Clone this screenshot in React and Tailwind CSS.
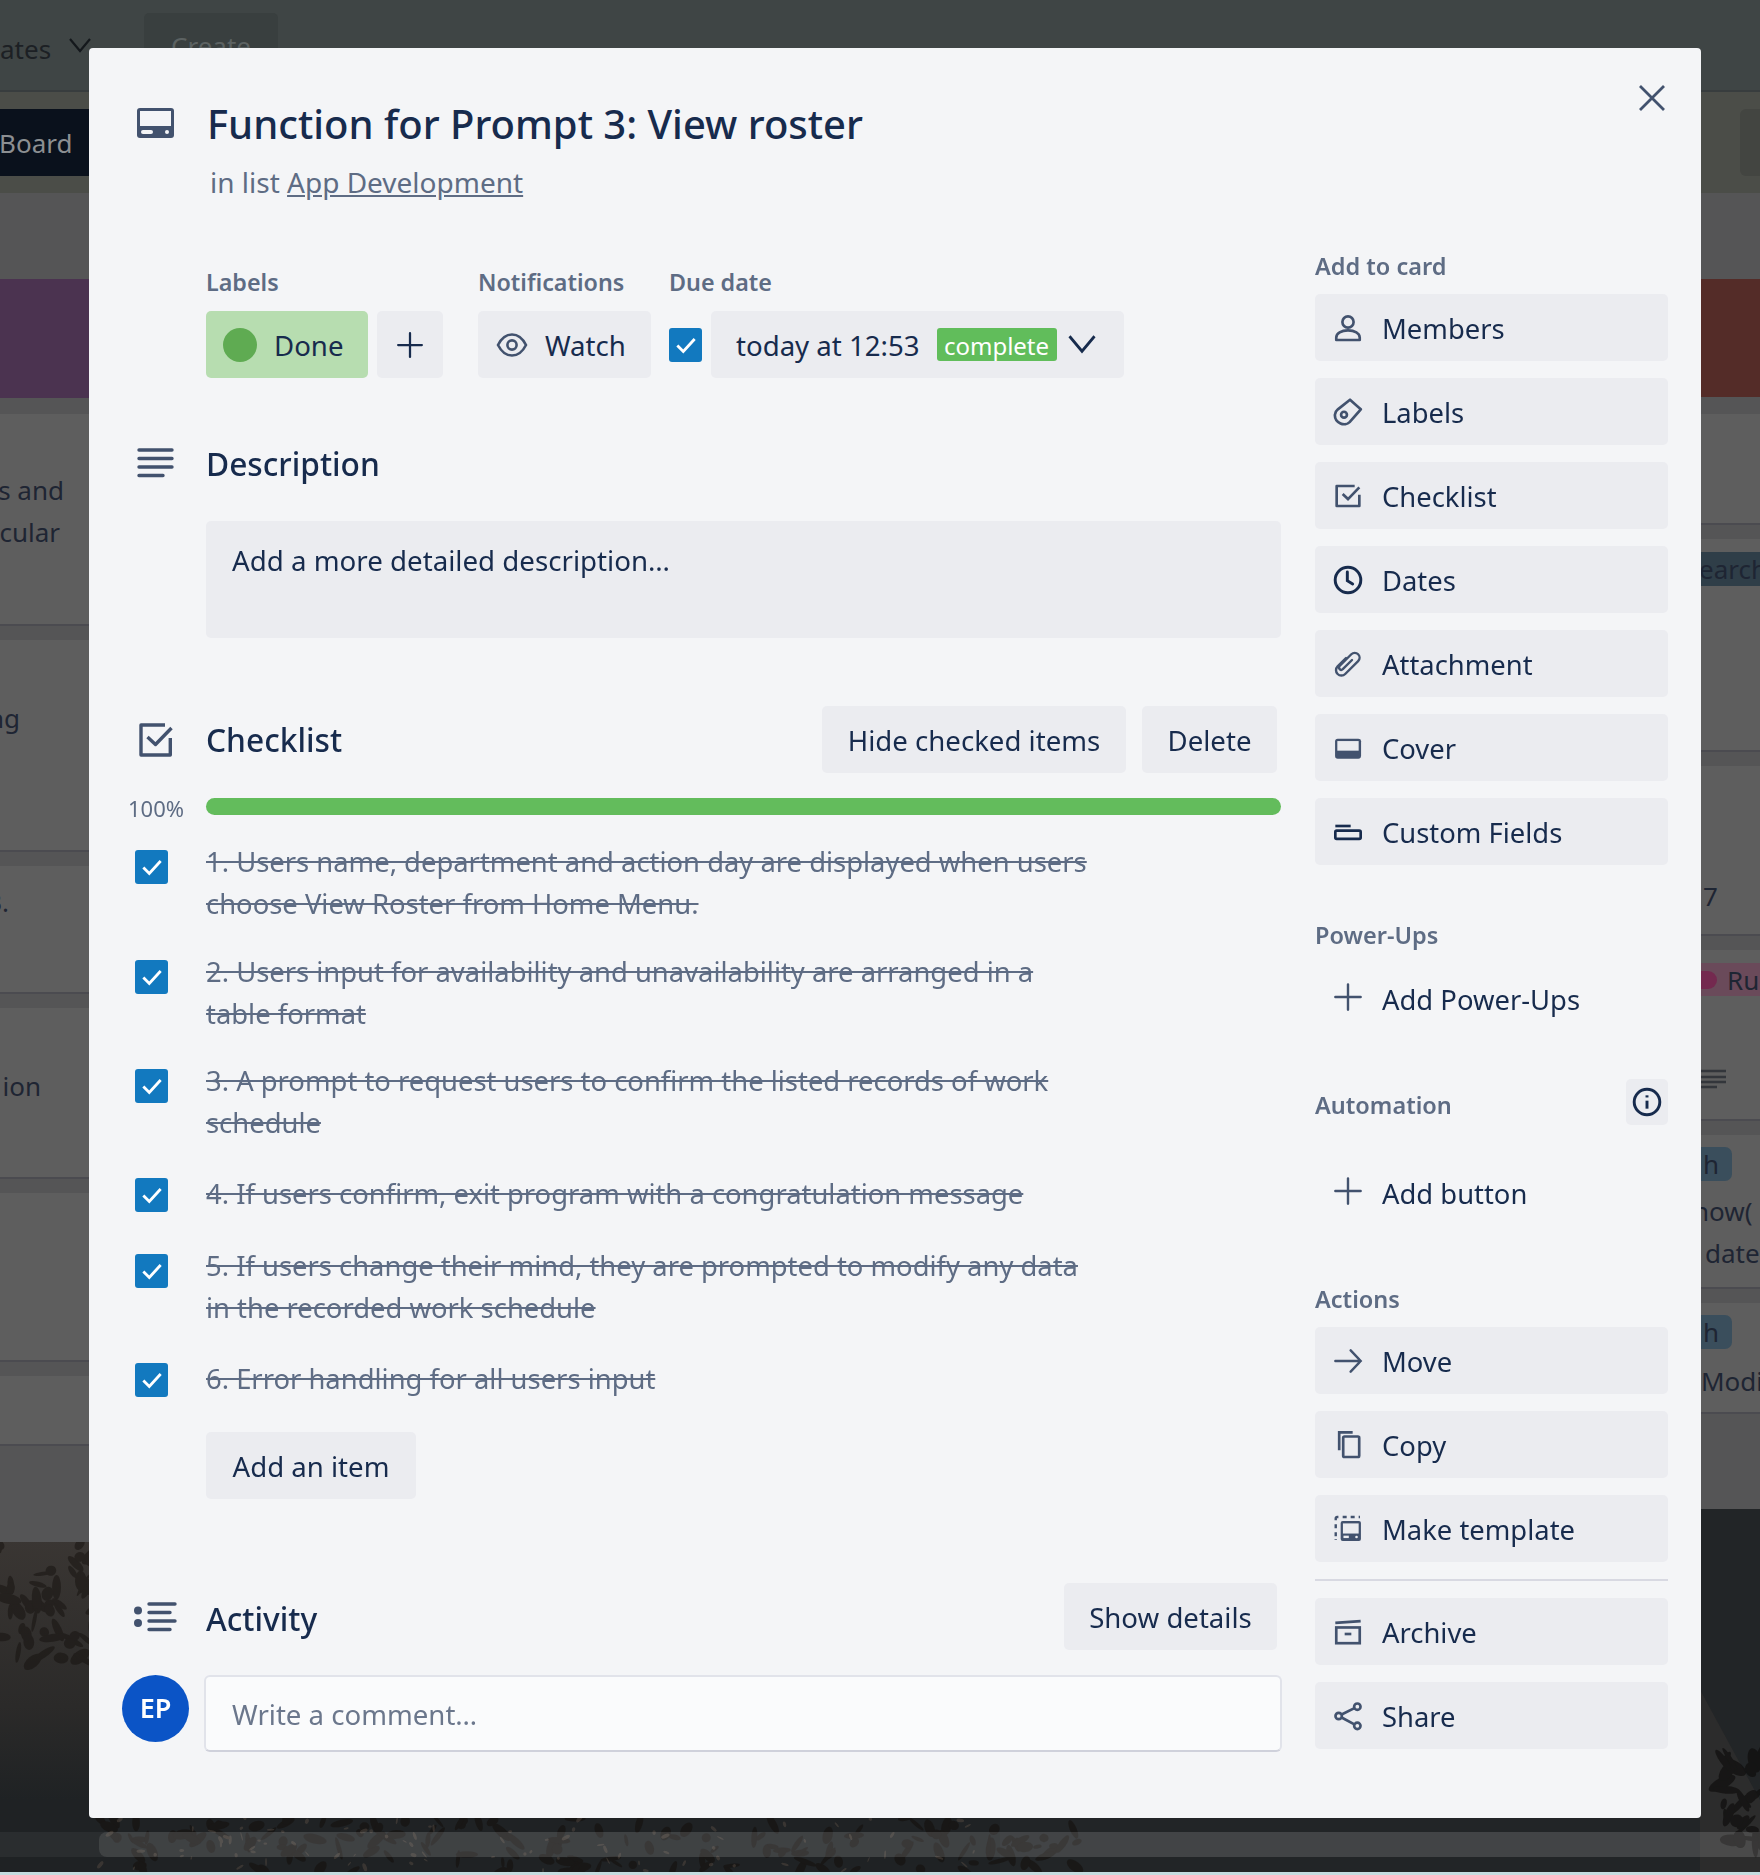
import React from 'react';

const leftCards = [
  { h: 212, lines: [['s and', 64], ['cular', 60]], pt: 55 },
  { h: 212, lines: [['ng', 20]], pt: 57 },
  { h: 128, lines: [['3.', 9]], pt: 15 },
  { h: 171, lines: [['ion', 41]], pt: 57 },
  { h: 169, lines: [] },
  { h: 70, lines: [] },
];

const addToCard = [
  ['Members', MembersIcon],
  ['Labels', TagIcon],
  ['Checklist', ChecklistIcon],
  ['Dates', ClockIcon],
  ['Attachment', ClipIcon],
  ['Cover', CoverIcon],
  ['Custom Fields', FieldsIcon],
];

const checklist = [
  { lines: ['1. Users name, department and action day are displayed when users', 'choose View Roster from Home Menu.'], h: 'h-[110px]' },
  { lines: ['2. Users input for availability and unavailability are arranged in a', 'table format'], h: 'h-[109px]' },
  { lines: ['3. A prompt to request users to confirm the listed records of work', 'schedule'], h: 'h-[109px]' },
  { lines: ['4. If users confirm, exit program with a congratulation message'], h: 'h-[76px]', single: true },
  { lines: ['5. If users change their mind, they are prompted to modify any data', 'in the recorded work schedule'], h: 'h-[109px]' },
  { lines: ['6. Error handling for all users input'], h: 'h-[69px]', single: true },
];

// rock texture for the photo behind the board
function scatter(seed, count, x, y, w, h, size) {
  let s = seed;
  const next = () => {
    s = (s * 16807) % 2147483647;
    return s / 2147483647;
  };
  return Array.from({ length: count }, () => ({
    cx: x + next() * w,
    cy: y + next() * h,
    rx: size * (0.5 + next()),
    ry: size * (0.2 + next() * 0.45),
    rot: next() * 180,
  }));
}

const rockPatches = [
  { fill: '#15110e', opacity: 0.5, items: scatter(11, 55, 0, 1543, 100, 120, 9) },
  { fill: '#15110e', opacity: 0.6, items: scatter(23, 170, 100, 1818, 1000, 54, 8) },
  { fill: '#5b5046', opacity: 0.45, items: scatter(37, 90, 100, 1818, 900, 54, 3) },
  { fill: '#0f0e0d', opacity: 0.7, items: scatter(41, 30, 1722, 1740, 40, 110, 10) },
];

function MembersIcon() {
  return (
    <svg viewBox="0 0 24 24" className="h-8 w-8" fill="none" stroke="#42526e" strokeWidth="2">
      <circle cx="12" cy="7.5" r="4.2" />
      <path d="M3.2 21v-1.8c0-3.2 3.8-5.4 8.8-5.4s8.8 2.2 8.8 5.4V21z" strokeLinejoin="round" />
    </svg>
  );
}

function TagIcon() {
  return (
    <svg viewBox="0 0 24 24" className="h-8 w-8" fill="none" stroke="#42526e" strokeWidth="2" strokeLinejoin="round">
      <path d="M13.5 2.8 21.6 10l-8.400 9.600c-1.600 1.600-4.600 2-6.800 1-2.600-1.200-4.400-3.800-4.200-6.600.1-1.800 1-3 2.200-4z" />
      <circle cx="9" cy="14" r="2.2" />
    </svg>
  );
}

function ChecklistIcon() {
  return (
    <svg viewBox="0 0 24 24" className="h-8 w-8" fill="none" stroke="#42526e" strokeWidth="2">
      <path d="M20.500 11v8.500h-17v-15H17" strokeLinejoin="round" />
      <path d="m8 10.500 4 3.800 8.500-8.800" />
    </svg>
  );
}

function ClockIcon() {
  return (
    <svg viewBox="0 0 24 24" className="h-8 w-8" fill="none" stroke="#172b4d" strokeWidth="2.2">
      <circle cx="12" cy="12" r="9.6" />
      <path d="M11.500 6v6.500l4 2.500" strokeLinecap="round" />
    </svg>
  );
}

function ClipIcon() {
  return (
    <svg viewBox="0 0 24 24" className="h-8 w-8" fill="none" stroke="#42526e" strokeWidth="1.8" strokeLinecap="round">
      <path d="m10.500 7.500-6.300 6.300a4 4 0 0 0 5.700 5.700l9.700-9.700a3.600 3.600 0 0 0-5.100-5.100l-8.800 8.800a1.700 1.700 0 0 0 2.400 2.400l6.900-6.900" />
    </svg>
  );
}

function CoverIcon() {
  return (
    <svg viewBox="0 0 24 24" className="h-8 w-8">
      <rect x="2.300" y="5" width="19.500" height="15" rx="2" fill="#42526e" />
      <rect x="4" y="6.800" width="16" height="7.200" fill="#ebecf0" />
    </svg>
  );
}

function FieldsIcon() {
  return (
    <svg viewBox="0 0 24 24" className="h-8 w-8" fill="none" stroke="#172b4d" strokeWidth="2">
      <path d="M2.500 7.500H14" />
      <rect x="2.500" y="11" width="19" height="6.200" rx="1" />
    </svg>
  );
}

function PlusIcon({ className = 'h-8 w-8', stroke = '#42526e' }) {
  return (
    <svg viewBox="0 0 24 24" className={className} fill="none" stroke={stroke} strokeWidth="1.8" strokeLinecap="round">
      <path d="M12 2.500v19M2.500 12h19" />
    </svg>
  );
}

function InfoIcon() {
  return (
    <svg viewBox="0 0 24 24" className="h-8 w-8" fill="none" stroke="#172b4d" strokeWidth="2.2">
      <circle cx="12" cy="12" r="9.6" />
      <path d="M12 11v6" />
      <path d="M12 7v1.600" />
    </svg>
  );
}

function ArrowIcon() {
  return (
    <svg viewBox="0 0 24 24" className="h-8 w-8" fill="none" stroke="#42526e" strokeWidth="1.8" strokeLinecap="round">
      <path d="M2.500 12h19M14 4l7.500 8-7.500 8" />
    </svg>
  );
}

function CopyIcon() {
  return (
    <svg viewBox="0 0 24 24" className="h-8 w-8" fill="none" stroke="#42526e" strokeWidth="2">
      <rect x="8.400" y="5.600" width="12" height="15.400" rx="1" />
      <path d="M15.500 2.500H5.400v13.500" />
    </svg>
  );
}

function TemplateIcon() {
  return (
    <svg viewBox="0 0 24 24" className="h-8 w-8" fill="none">
      <path d="M2.800 5.500V4a1 1 0 0 1 1-1h1M8 3h3M14 3h3M20 3h1M2.800 8.500v3M2.800 14.500v3M2.800 19.500v.5" stroke="#42526e" strokeWidth="1.8" />
      <rect x="6.500" y="6" width="15.200" height="15" rx="1.500" fill="#42526e" />
      <rect x="8.200" y="7.800" width="11.800" height="7.600" fill="#ebecf0" />
      <rect x="8.600" y="17" width="4" height="1.800" fill="#ebecf0" />
      <circle cx="18.400" cy="18" r="1" fill="#ebecf0" />
    </svg>
  );
}

function ArchiveIcon() {
  return (
    <svg viewBox="0 0 24 24" className="h-8 w-8" fill="none" stroke="#42526e" strokeWidth="2">
      <path d="m2.500 5.200 19-1.400" />
      <rect x="3.200" y="8.600" width="17.600" height="11.800" />
      <path d="M9.500 13.500h5" />
    </svg>
  );
}

function ShareIcon() {
  return (
    <svg viewBox="0 0 24 24" className="h-8 w-8" fill="none" stroke="#42526e" strokeWidth="2">
      <circle cx="19" cy="5" r="2.400" />
      <circle cx="5" cy="12" r="2.400" />
      <circle cx="19" cy="19.400" r="2.400" />
      <path d="M7.200 10.900 16.800 6.100M7.200 13.100l9.600 5.200" />
    </svg>
  );
}

function CheckBox() {
  return (
    <div className="flex h-[34px] w-[33px] items-center justify-center rounded-[3px] bg-[#1279bf]">
      <svg viewBox="0 0 24 24" className="h-[26px] w-[26px]" fill="none" stroke="#fff" strokeWidth="2.6">
        <path d="m4 12.500 5.500 5.500L20 6.500" />
      </svg>
    </div>
  );
}

function Chevron({ className, stroke = '#172b4d' }) {
  return (
    <svg viewBox="0 0 24 24" className={className} fill="none" stroke={stroke} strokeWidth="2.2">
      <path d="m2 5 10 12L22 5" />
    </svg>
  );
}

function GreyButton({ className = '', children }) {
  return (
    <div className={`flex h-[67px] items-center rounded-[5px] bg-[#ebecf0] ${className}`}>{children}</div>
  );
}

function SideButton({ label, icon: Icon, plain }) {
  return (
    <div className={`flex h-[67px] w-[353px] items-center gap-[18px] rounded-[5px] pl-[17px] ${plain ? '' : 'bg-[#ebecf0]'}`}>
      <Icon />
      <span className={`${plain ? 'pt-[7px]' : 'pt-[3px]'} text-[27.400px] text-[#172b4d]`}>{label}</span>
    </div>
  );
}

function SideLabel({ children }) {
  return <div className="h-[30px] text-[23.500px] leading-[28px] font-semibold text-[#5e6c84]">{children}</div>;
}

function MetaLabel({ children }) {
  return <div className="h-[30px] text-[23.300px] leading-[30px] font-semibold text-[#5e6c84]">{children}</div>;
}

function SectionIconGutter({ children, pl = 'pl-[48px]' }) {
  return <div className={`flex w-[117px] shrink-0 items-center ${pl}`}>{children}</div>;
}

function BoardBackdrop() {
  return (
    <svg viewBox="0 0 1760 1875" className="absolute inset-0 -z-10 h-full w-full">
      <defs>
        <linearGradient id="snow" x1="0" y1="0" x2="0" y2="1">
          <stop offset="0.1" stopColor="#3a3633" />
          <stop offset="0.55" stopColor="#2b2a29" />
          <stop offset="0.8" stopColor="#1f2224" />
        </linearGradient>
      </defs>
      <rect x="0" y="1500" width="1760" height="375" fill="url(#snow)" />
      <rect x="1000" y="1800" width="760" height="75" fill="#222527" />
      <path d="M1700 1500h60v300l-60-110z" fill="#222527" />
      <path d="M1700 1690l60 110v75h-60z" fill="#2c2c2c" />
      {rockPatches.map(patch => (
        <g key={patch.fill + patch.items.length} fill={patch.fill} opacity={patch.opacity}>
          {patch.items.map((r, i) => (
            <ellipse key={i} cx={r.cx} cy={r.cy} rx={r.rx} ry={r.ry} transform={`rotate(${r.rot} ${r.cx} ${r.cy})`} />
          ))}
        </g>
      ))}
    </svg>
  );
}

function LeftColumn() {
  return (
    <div className="flex w-[89px] flex-col bg-[#555556] text-[26px] leading-[42px] whitespace-nowrap text-[#1e2533]">
      <div className="mt-[86px] h-[119px] bg-[#4b3350]" />
      <div className="mt-[16px] flex flex-col gap-[14px]">
        {leftCards.map((card, i) => (
          <div key={i} className="flex flex-col border-b-2 border-[#4b4b50] bg-[#5e5e5e]" style={{ height: card.h, paddingTop: card.pt || 0 }}>
            {card.lines.map(([text, end]) => (
              <div key={text} className="flex justify-end" style={{ width: end }}>
                <span>{text}</span>
              </div>
            ))}
          </div>
        ))}
      </div>
      <div className="h-[96px]" />
    </div>
  );
}

function RightColumn() {
  return (
    <div className="flex w-[59px] flex-col overflow-hidden bg-[#555556] text-[26px] leading-[42px] whitespace-nowrap text-[#1e2533]">
      <div className="mt-[86px] h-[118px] bg-[#542c28]" />
      <div className="mt-[17px] flex flex-col gap-[14px]">
        <div className="h-[111px] border-b-2 border-[#4b4b50] bg-[#5e5e5e]" />
        <div className="h-[213px] border-b-2 border-[#4b4b50] bg-[#5e5e5e] pt-[13px]">
          <div className="h-[34px] bg-[#2f3e48] leading-[34px]"><span className="ml-[-2px]">earch</span></div>
        </div>
        <div className="h-[170px] border-b-2 border-[#4b4b50] bg-[#5e5e5e] pt-[109px]">
          <div className="pl-[2px]">7</div>
        </div>
        <div className="h-[171px] border-b-2 border-[#4b4b50] bg-[#5e5e5e] pt-[13px]">
          <div className="flex h-[33px] items-center bg-[#6a4a5a]">
            <span className="h-[18px] w-[16px] shrink-0 rounded-r-full bg-[#74294f]" />
            <span className="ml-[10px]">Rub</span>
          </div>
          <svg viewBox="0 0 25 20" className="mt-[73px] h-[20px] w-[25px]" stroke="#33363b" strokeWidth="2.4">
            <path d="M0 2h25M0 8h25M0 13h25M0 18h16" />
          </svg>
        </div>
        <div className="h-[154px] border-b-2 border-[#4b4b50] bg-[#5e5e5e] pt-[12px]">
          <div className="flex h-[34px] w-[31px] items-center rounded-r-[7px] bg-[#3a4e5c]">
            <span className="pl-[2px]">h</span>
          </div>
          <div className="mt-[9px] ml-[-8px]">now(</div>
          <div className="pl-[4px]">date</div>
        </div>
        <div className="h-[111px] border-b-2 border-[#4b4b50] bg-[#5e5e5e] pt-[12px]">
          <div className="flex h-[34px] w-[31px] items-center rounded-r-[7px] bg-[#3a4e5c]">
            <span className="pl-[2px]">h</span>
          </div>
          <div className="mt-[11px]">Modi</div>
        </div>
      </div>
      <div className="h-[95px]" />
    </div>
  );
}

function CardModal() {
  return (
    <div className="absolute top-[48px] left-[89px] flex h-[1770px] w-[1612px] rounded-[4px] bg-[#f4f5f7] text-[#172b4d]">
      <div className="absolute top-[36px] right-[35px]">
        <svg viewBox="0 0 28 28" className="h-[28px] w-[28px]" fill="none" stroke="#42526e" strokeWidth="2.800">
          <path d="m2 2 24 24M26 2 2 26" />
        </svg>
      </div>

      <div className="w-[1193px] shrink-0 pt-[47px]">
        <div className="flex h-[56px]">
          <SectionIconGutter>
            <svg viewBox="0 0 37 30" className="h-[30px] w-[37px]">
              <rect width="37" height="30" rx="3" fill="#42526e" />
              <rect x="3" y="3" width="31" height="15" fill="#f4f5f7" />
              <rect x="4" y="22" width="12" height="4" rx="2" fill="#f4f5f7" />
              <circle cx="30" cy="24" r="2" fill="#f4f5f7" />
            </svg>
          </SectionIconGutter>
          <h1 className="ml-[1px] pt-[1px] text-[40px] leading-[56px] font-medium">Function for Prompt 3: View roster</h1>
        </div>
        <div className="mt-[12px] pl-[121px] text-[28px] leading-[38px] text-[#5e6c84]">
          in list <span className="underline">App Development</span>
        </div>

        <div className="mt-[66px] flex pl-[117px]">
          <div className="w-[272px]">
            <MetaLabel>Labels</MetaLabel>
            <div className="mt-[14px] flex gap-[9px]">
              <div className="flex h-[67px] w-[162px] items-center rounded-[5px] bg-[#b7ddb0] pl-[17px]">
                <span className="h-[34px] w-[34px] rounded-full bg-[#5fab52]" />
                <span className="ml-[17px] pt-[2px] text-[27.600px]">Done</span>
              </div>
              <GreyButton className="w-[66px] justify-center">
                <PlusIcon className="h-[30px] w-[30px]" stroke="#172b4d" />
              </GreyButton>
            </div>
          </div>
          <div className="w-[191px]">
            <MetaLabel>Notifications</MetaLabel>
            <GreyButton className="mt-[14px] w-[173px] pl-[18px]">
              <svg viewBox="0 0 32 26" className="h-[26px] w-[32px]" fill="none" stroke="#42526e" strokeWidth="2.600">
                <path d="M2 13c3-6 8-10.500 14-10.500S27 7 30 13c-3 6-8 10.500-14 10.500S5 19 2 13z" />
                <circle cx="16" cy="13" r="4.600" />
              </svg>
              <span className="ml-[17px] pt-[2px] text-[27.600px]">Watch</span>
            </GreyButton>
          </div>
          <div>
            <MetaLabel>Due date</MetaLabel>
            <div className="mt-[14px] flex gap-[9px]">
              <div className="flex h-[67px] items-center">
                <CheckBox />
              </div>
              <GreyButton className="w-[413px] pl-[25px]">
                <span className="pt-[2px] text-[27.600px]">today at 12:53</span>
                <span className="ml-[17px] flex h-[33px] w-[120px] shrink-0 items-center justify-center rounded-[3px] bg-[#61bd5b] pt-[2px] text-[24px] text-white">complete</span>
                <Chevron className="ml-[10px] h-[30px] w-[30px] shrink-0" />
              </GreyButton>
            </div>
          </div>
        </div>

        <div className="mt-[65px] flex h-[40px] items-center">
          <SectionIconGutter>
            <svg viewBox="0 0 37 30" className="h-[30px] w-[37px]" stroke="#42526e" strokeWidth="3.400" strokeLinecap="round" fill="none">
              <path d="M2 2h33M2 10.500h33M2 19h33M2 27.500h24" />
            </svg>
          </SectionIconGutter>
          <h2 className="pt-[2px] text-[31.700px] font-medium">Description</h2>
        </div>
        <div className="mt-[38px] ml-[117px] h-[117px] w-[1075px] rounded-[5px] bg-[#ebecf0] px-[26px] pt-[19px] text-[27.700px] leading-[40px]">
          Add a more detailed description…
        </div>

        <div className="mt-[68px] flex h-[67px] items-center pr-[5px]">
          <SectionIconGutter pl="pl-[50px]">
            <svg viewBox="0 0 34 34" className="h-[34px] w-[34px]" fill="none" stroke="#42526e" strokeWidth="3.400" strokeLinejoin="round">
              <path d="M31.300 15v17H2V2h24" />
              <path d="m8.500 14 8 7.500L32.500 5" />
            </svg>
          </SectionIconGutter>
          <h2 className="text-[31.700px] font-medium">Checklist</h2>
          <div className="ml-auto flex gap-[16px]">
            <GreyButton className="w-[304px] justify-center"><span className="pt-[2px] text-[27.600px]">Hide checked items</span></GreyButton>
            <GreyButton className="w-[135px] justify-center"><span className="pt-[2px] text-[27.600px]">Delete</span></GreyButton>
          </div>
        </div>

        <div className="mt-[25px] flex h-[17px] items-center">
          <div className="w-[117px] pt-[4px] pl-[39px] text-[22px] text-[#5e6c84]">100%</div>
          <div className="h-[17px] w-[1075px] rounded-full bg-[#63bc5c]" />
        </div>

        <div className="mt-[35px]">
          {checklist.map(item => (
            <div key={item.lines[0]} className={`flex ${item.h}`}>
              <div className="w-[117px] pl-[46px]"><CheckBox /></div>
              <div className={`${item.single ? 'mt-[-5px]' : 'mt-[-9px]'} text-[27.400px] leading-[42px] text-[#5e6c84] line-through`}>
                {item.lines.map(line => <div key={line} className="whitespace-nowrap">{line}</div>)}
              </div>
            </div>
          ))}
        </div>

        <GreyButton className="ml-[117px] w-[210px] justify-center"><span className="pt-[2px] text-[27.600px]">Add an item</span></GreyButton>

        <div className="mt-[84px] flex h-[67px] items-center pr-[5px]">
          <SectionIconGutter pl="pl-[45px]">
            <svg viewBox="0 0 43 30" className="h-[30px] w-[43px]" fill="none" stroke="#42526e" strokeWidth="3.400" strokeLinecap="round">
              <circle cx="4" cy="8.500" r="4" fill="#42526e" stroke="none" />
              <circle cx="4" cy="21" r="4" fill="#42526e" stroke="none" />
              <path d="M15 2h26M15 10.500h21M15 19h26M15 27.500h21" />
            </svg>
          </SectionIconGutter>
          <h2 className="pt-[5px] text-[31.700px] font-medium">Activity</h2>
          <GreyButton className="ml-auto w-[213px] justify-center"><span className="pt-[2px] text-[27.600px]">Show details</span></GreyButton>
        </div>

        <div className="mt-[25px] flex">
          <div className="w-[115px] pl-[33px]">
            <div className="flex h-[67px] w-[67px] items-center justify-center rounded-full bg-[#0b54c6] text-[27px] font-semibold text-white">EP</div>
          </div>
          <div className="flex h-[77px] w-[1078px] items-center rounded-[6px] border-2 border-[#e1e3ea] border-b-[#cfd1db] bg-[#fafbfc] pt-[2px] pl-[26px] text-[27.600px] text-[#6b778c]">
            Write a comment…
          </div>
        </div>
      </div>

      <div className="ml-[33px] w-[353px] pt-[204px]">
        <SideLabel>Add to card</SideLabel>
        <div className="mt-[12px] flex flex-col gap-[17px]">
          {addToCard.map(([label, icon]) => <SideButton key={label} label={label} icon={icon} />)}
        </div>

        <div className="mt-[56px]"><SideLabel>Power-Ups</SideLabel></div>
        <div className="mt-[12px]"><SideButton plain label="Add Power-Ups" icon={PlusIcon} /></div>

        <div className="mt-[49px] flex h-[46px] items-center justify-between">
          <div className="pt-[8px]"><SideLabel>Automation</SideLabel></div>
          <div className="flex h-[46px] w-[42px] items-center justify-center rounded-[5px] bg-[#ebecf0]"><InfoIcon /></div>
        </div>
        <div className="mt-[32px]"><SideButton plain label="Add button" icon={PlusIcon} /></div>

        <div className="mt-[61px]"><SideLabel>Actions</SideLabel></div>
        <div className="mt-[12px] flex flex-col gap-[17px]">
          <SideButton label="Move" icon={ArrowIcon} />
          <SideButton label="Copy" icon={CopyIcon} />
          <SideButton label="Make template" icon={TemplateIcon} />
        </div>
        <div className="my-[17px] h-[2px] bg-[#d8d9e2]" />
        <div className="flex flex-col gap-[17px]">
          <SideButton label="Archive" icon={ArchiveIcon} />
          <SideButton label="Share" icon={ShareIcon} />
        </div>
      </div>
    </div>
  );
}

export default function App() {
  return (
    <div className="relative isolate h-[1875px] w-[1760px] overflow-hidden bg-[#222527] font-['Noto_Sans',sans-serif]">
      <BoardBackdrop />

      <div className="flex h-[92px] items-start border-b-2 border-[#383d3e] bg-[#3f4545] text-[26px] text-[#1c2024]">
        <span className="mt-[29px] w-[50px] leading-[40px]">ates</span>
        <Chevron className="mt-[34px] ml-[18px] h-[24px] w-[24px] shrink-0" stroke="#14181c" />
        <div className="mt-[13px] ml-[52px] flex h-[67px] w-[134px] justify-center rounded-[5px] bg-[#393f3f] pt-[14px] text-[#5c6262]">Create</div>
      </div>

      <div className="flex h-[101px] items-center justify-between bg-[#4b4d48]">
        <div className="h-[67px] w-[89px] overflow-hidden bg-[#0a111c] pt-[14px] text-[26px] leading-[40px] whitespace-nowrap text-[#8c8f92]">
          <span className="ml-[-1px]">Board</span>
        </div>
        <div className="h-[67px] w-[20px] rounded-l-[6px] bg-[#434541]" />
      </div>

      <div className="flex items-start justify-between">
        <LeftColumn />
        <RightColumn />
      </div>

      <div className="absolute top-[1832px] right-0 left-0 flex h-[25px] bg-white/5">
        <div className="ml-[99px] flex-1 rounded-l-[8px] bg-white/10" />
      </div>
      <div className="absolute right-0 bottom-0 left-0 h-[3px] bg-[#c5dde0]" />

      <CardModal />
    </div>
  );
}
